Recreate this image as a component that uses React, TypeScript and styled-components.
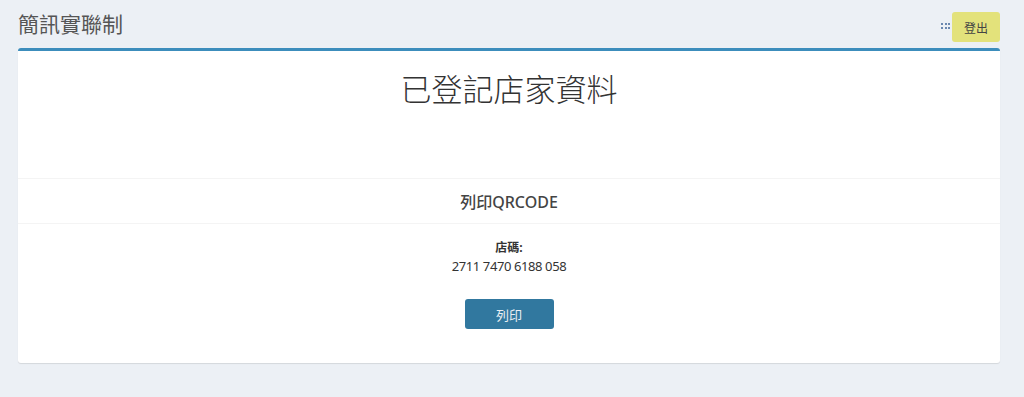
import React from "react";
import styled, { createGlobalStyle } from "styled-components";

const Global = createGlobalStyle`
  html, body { margin: 0; padding: 0; background: #ecf0f5; }
  body { font-family: "Noto Sans", "Noto Sans CJK TC", sans-serif; color: #333; }
  * { box-sizing: border-box; }
`;

const Page = styled.div`
  width: 1024px;
  min-height: 397px;
  background: #ecf0f5;
`;

const Header = styled.header`
  display: flex;
  justify-content: space-between;
  align-items: flex-start;
  height: 48px;
  padding: 12px 24px 0 18px;
`;

const Title = styled.h1`
  margin: 0;
  font-size: 21px;
  line-height: 22px;
  font-weight: 400;
  color: #555;
  font-family: "Noto Sans CJK TC", sans-serif;
`;

const Actions = styled.div`
  display: flex;
  align-items: center;
  gap: 2px;
  height: 30px;
`;

const Dots = styled.div`
  display: grid;
  grid-template-columns: repeat(3, 2px);
  grid-auto-rows: 2px;
  gap: 2px 1.5px;
  margin-bottom: 2px;
  span { background: #6a88b0; width: 2px; height: 2px; }
`;

const Logout = styled.button`
  width: 48px;
  height: 30px;
  border: none;
  border-radius: 3px;
  background: #e3e27b;
  color: #444;
  font-family: "Noto Sans CJK TC", sans-serif;
  font-size: 12px;
  font-weight: 400;
  padding: 0;
`;

const Box = styled.section`
  margin: 0 24px 0 18px;
  background: #fff;
  border-top: 3px solid #3c8dbc;
  border-radius: 3px;
  box-shadow: 0 1px 1px rgba(0, 0, 0, 0.1);
`;

const Hero = styled.div`
  height: 128px;
  padding-top: 20px;
  text-align: center;
  border-bottom: 1px solid #f4f4f4;
`;

const HeroTitle = styled.h2`
  margin: 0;
  font-size: 31px;
  line-height: 34px;
  font-weight: 300;
  color: #333;
  font-family: "Noto Sans CJK TC", sans-serif;
`;

const SectionHead = styled.div`
  height: 45px;
  display: flex;
  align-items: center;
  justify-content: center;
  border-bottom: 1px solid #f4f4f4;
  font-size: 16px;
  font-weight: 500;
  color: #444;
  font-family: "Noto Sans", "Noto Sans CJK TC", sans-serif;
`;

const Body = styled.div`
  padding: 14px 0 34px;
  display: flex;
  flex-direction: column;
  align-items: center;
  text-align: center;
`;

const Label = styled.div`
  font-size: 12px;
  line-height: 19px;
  font-weight: 700;
  color: #333;
`;

const Code = styled.div`
  font-size: 13px;
  line-height: 19px;
  letter-spacing: -0.4px;
  color: #333;
`;

const PrintButton = styled.button`
  margin-top: 23px;
  width: 89px;
  height: 30px;
  border: none;
  border-radius: 3px;
  background: #31789f;
  color: #e8eef3;
  font-family: "Noto Sans CJK TC", sans-serif;
  font-size: 13px;
  padding: 0;
`;

export default function App() {
  return (
    <Page>
      <Global />
      <Header>
        <Title>簡訊實聯制</Title>
        <Actions>
          <Dots>
            <span /><span /><span /><span /><span /><span />
          </Dots>
          <Logout>登出</Logout>
        </Actions>
      </Header>
      <Box>
        <Hero>
          <HeroTitle>已登記店家資料</HeroTitle>
        </Hero>
        <SectionHead>列印QRCODE</SectionHead>
        <Body>
          <Label>店碼:</Label>
          <Code>2711 7470 6188 058</Code>
          <PrintButton>列印</PrintButton>
        </Body>
      </Box>
    </Page>
  );
}
